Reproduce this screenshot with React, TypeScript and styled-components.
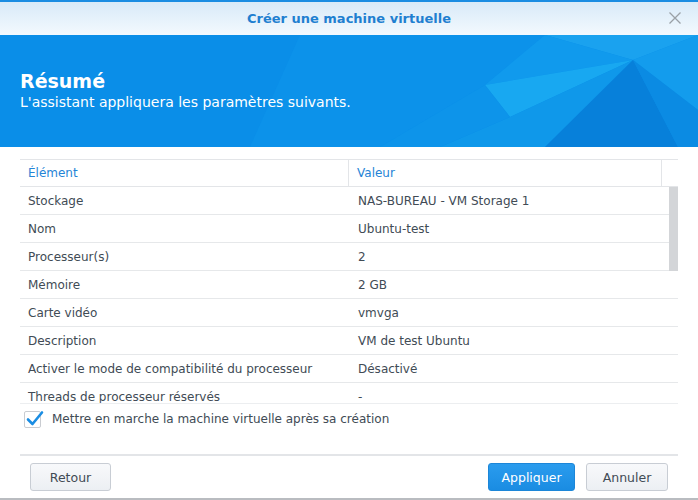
import React from "react";
import styled, { createGlobalStyle } from "styled-components";

const Global = createGlobalStyle`
  html, body { margin: 0; padding: 0; background: #ffffff; }
  body { font-family: "DejaVu Sans", Verdana, sans-serif; }
  * { box-sizing: border-box; }
`;

const Window = styled.div`
  width: 698px;
  height: 500px;
  display: flex;
  flex-direction: column;
  background: #fff;
  border-bottom: 2px solid #b9bcc0;
  overflow: hidden;
`;

const TitleBar = styled.div`
  height: 35px;
  flex: none;
  border-top: 2px solid #1b8de2;
  background: linear-gradient(#d8eaf8, #f3f9fe);
  display: flex;
  align-items: center;
  justify-content: center;
  position: relative;
`;

const Title = styled.div`
  font-weight: bold;
  font-size: 13px;
  color: #1f7fd0;
`;

const CloseBtn = styled.div`
  position: absolute;
  right: 16px;
  top: 9px;
  width: 14px;
  height: 14px;
  display: flex;
`;

const Banner = styled.div`
  height: 112px;
  flex: none;
  position: relative;
  background: #0a8ee8;
  color: #fff;
  display: flex;
  flex-direction: column;
  justify-content: center;
  padding: 0 20px 2px 20px;
  overflow: hidden;
`;

const BannerArt = styled.svg`
  position: absolute;
  inset: 0;
  width: 100%;
  height: 100%;
`;

const BannerTitle = styled.div`
  position: relative;
  font-weight: bold;
  font-size: 19px;
  line-height: 23px;
`;

const BannerSub = styled.div`
  position: relative;
  font-size: 14px;
  line-height: 18px;
`;

const Content = styled.div`
  display: flex;
  flex-direction: column;
  padding: 12px 20px 0 20px;
`;

const Table = styled.div`
  width: 658px;
  display: flex;
  flex-direction: column;
`;

const HeadRow = styled.div`
  display: grid;
  grid-template-columns: 329px 313px 16px;
  height: 28px;
  border-top: 1px solid #e3e5e8;
  border-bottom: 1px solid #e3e5e8;
`;

const HeadCell = styled.div<{ $last?: boolean }>`
  display: flex;
  align-items: center;
  padding-left: 8px;
  font-size: 12px;
  color: #2584d6;
  border-right: ${(p) => (p.$last ? "none" : "1px solid #e3e5e8")};
`;

const BodyViewport = styled.div`
  position: relative;
  height: 217px;
  overflow: hidden;
  border-bottom: 1px solid #eceef0;
`;

const Row = styled.div`
  display: grid;
  grid-template-columns: 329px 329px;
  height: 28px;
  border-bottom: 1px solid #e6e8ea;
`;

const Cell = styled.div<{ $value?: boolean }>`
  display: flex;
  align-items: center;
  padding-left: ${(p) => (p.$value ? "9px" : "8px")};
  font-size: 12px;
  color: #414b55;
  white-space: nowrap;
`;

const ScrollThumb = styled.div`
  position: absolute;
  right: 0;
  top: 0;
  width: 9px;
  height: 84px;
  background: #d3d5d8;
`;

const CheckRow = styled.label`
  display: flex;
  align-items: center;
  gap: 11px;
  height: 30px;
  padding-left: 4px;
  font-size: 12px;
  color: #414b55;
`;

const CheckBox = styled.span`
  position: relative;
  width: 17px;
  height: 17px;
  border: 1px solid #c9ccd1;
  border-radius: 2px;
  background: #fff;
  flex: none;
`;

const CheckMark = styled.svg`
  position: absolute;
  left: 1px;
  top: -2px;
  width: 18px;
  height: 18px;
`;

const Footer = styled.div`
  margin-top: 20px;
  border-top: 2px solid #e3e5e8;
  display: flex;
  align-items: center;
  padding: 7px 10px 0 10px;
  gap: 11px;
`;

const Spacer = styled.div`
  flex: 1;
`;

const Button = styled.button<{ $primary?: boolean; $w: number }>`
  width: ${(p) => p.$w}px;
  height: 28px;
  border-radius: 3px;
  font-family: "DejaVu Sans", Verdana, sans-serif;
  font-size: 12.5px;
  padding: 0;
  cursor: pointer;
  border: 1px solid ${(p) => (p.$primary ? "#1c86d8" : "#c8cdd4")};
  color: ${(p) => (p.$primary ? "#ffffff" : "#414b55")};
  background: ${(p) =>
    p.$primary
      ? "linear-gradient(#2a9cee, #1a8ce2)"
      : "linear-gradient(#f8f9fb, #eceff3)"};
`;

const rows: [string, string][] = [
  ["Stockage", "NAS-BUREAU - VM Storage 1"],
  ["Nom", "Ubuntu-test"],
  ["Processeur(s)", "2"],
  ["Mémoire", "2 GB"],
  ["Carte vidéo", "vmvga"],
  ["Description", "VM de test Ubuntu"],
  ["Activer le mode de compatibilité du processeur", "Désactivé"],
  ["Threads de processeur réservés", "-"],
];

export default function App() {
  return (
    <>
      <Global />
      <Window>
        <TitleBar>
          <Title>Créer une machine virtuelle</Title>
          <CloseBtn>
            <svg width="14" height="14" viewBox="0 0 14 14">
              <path d="M1.5 1.5 L12.5 12.5 M12.5 1.5 L1.5 12.5" stroke="#9aa0a6" strokeWidth="1.3" fill="none" />
            </svg>
          </CloseBtn>
        </TitleBar>
        <Banner>
          <BannerArt viewBox="0 0 698 112" preserveAspectRatio="none">
            <polygon points="300,0 545,0 485,50 380,112 250,112" fill="#0c92ea" />
            <polygon points="545,0 698,0 633,25" fill="#1aa2ef" />
            <polygon points="633,25 698,0 698,75" fill="#139ced" />
            <polygon points="485,50 545,0 633,25" fill="#109aed" />
            <polygon points="485,50 633,25 510,82" fill="#18a8f1" />
            <polygon points="510,82 633,25 545,112 440,112" fill="#0f98ea" />
            <polygon points="380,112 485,50 510,82 440,112" fill="#0d94ea" />
            <polygon points="633,25 545,112 678,112" fill="#0780da" />
            <polygon points="633,25 698,75 698,112 678,112" fill="#0b8be3" />
          </BannerArt>
          <BannerTitle>Résumé</BannerTitle>
          <BannerSub>L'assistant appliquera les paramètres suivants.</BannerSub>
        </Banner>
        <Content>
          <Table>
            <HeadRow>
              <HeadCell>Élément</HeadCell>
              <HeadCell>Valeur</HeadCell>
              <HeadCell $last />
            </HeadRow>
            <BodyViewport>
              {rows.map(([k, v]) => (
                <Row key={k}>
                  <Cell>{k}</Cell>
                  <Cell $value>{v}</Cell>
                </Row>
              ))}
              <ScrollThumb />
            </BodyViewport>
          </Table>
          <CheckRow>
            <CheckBox>
              <CheckMark viewBox="0 0 18 18">
                <path d="M2 9.5 L6.5 14 L16 2.5" stroke="#1a8de3" strokeWidth="2.6" fill="none" strokeLinecap="round" strokeLinejoin="round" />
              </CheckMark>
            </CheckBox>
            Mettre en marche la machine virtuelle après sa création
          </CheckRow>
          <Footer>
            <Button $w={81}>Retour</Button>
            <Spacer />
            <Button $primary $w={87}>Appliquer</Button>
            <Button $w={82}>Annuler</Button>
          </Footer>
        </Content>
      </Window>
    </>
  );
}
